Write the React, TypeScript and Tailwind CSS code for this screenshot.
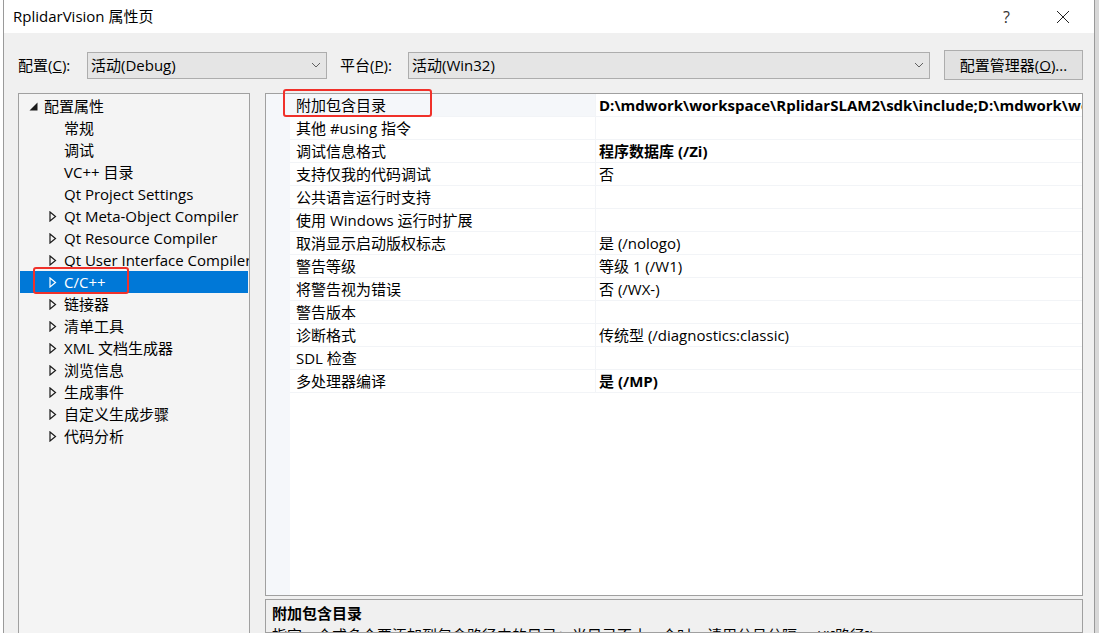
import React from 'react'

const font = { fontFamily: '"Open Sans", "Noto Sans CJK SC", sans-serif' }

const treeItems: { label: string; expander: boolean }[] = [
  { label: '常规', expander: false },
  { label: '调试', expander: false },
  { label: 'VC++ 目录', expander: false },
  { label: 'Qt Project Settings', expander: false },
  { label: 'Qt Meta-Object Compiler', expander: true },
  { label: 'Qt Resource Compiler', expander: true },
  { label: 'Qt User Interface Compiler', expander: true },
  { label: 'C/C++', expander: true },
  { label: '链接器', expander: true },
  { label: '清单工具', expander: true },
  { label: 'XML 文档生成器', expander: true },
  { label: '浏览信息', expander: true },
  { label: '生成事件', expander: true },
  { label: '自定义生成步骤', expander: true },
  { label: '代码分析', expander: true },
]

const props: { name: string; value: string; bold?: boolean }[] = [
  { name: '附加包含目录', value: 'D:\\mdwork\\workspace\\RplidarSLAM2\\sdk\\include;D:\\mdwork\\workspace\\RplidarSLAM2\\sdk\\src', bold: true },
  { name: '其他 #using 指令', value: '' },
  { name: '调试信息格式', value: '程序数据库 (/Zi)', bold: true },
  { name: '支持仅我的代码调试', value: '否' },
  { name: '公共语言运行时支持', value: '' },
  { name: '使用 Windows 运行时扩展', value: '' },
  { name: '取消显示启动版权标志', value: '是 (/nologo)' },
  { name: '警告等级', value: '等级 1 (/W1)' },
  { name: '将警告视为错误', value: '否 (/WX-)' },
  { name: '警告版本', value: '' },
  { name: '诊断格式', value: '传统型 (/diagnostics:classic)' },
  { name: 'SDL 检查', value: '' },
  { name: '多处理器编译', value: '是 (/MP)', bold: true },
]

function Chevron() {
  return (
    <svg width="10" height="6" viewBox="0 0 10 6" className="shrink-0">
      <path d="M1 1 L5 5 L9 1" fill="none" stroke="#606060" strokeWidth="1" />
    </svg>
  )
}

function Expander({ color }: { color: string }) {
  return (
    <svg width="8" height="11" viewBox="0 0 8 11" className="shrink-0">
      <path d="M1 1 L6.5 5.5 L1 10 Z" fill="none" stroke={color} strokeWidth="1.2" strokeLinejoin="miter" />
    </svg>
  )
}

function Dropdown({ text, width }: { text: string; width: string }) {
  return (
    <div className={`${width} shrink-0 h-[27px] bg-[#e5e5e5] border border-[#adadad] flex items-center justify-between pl-[3px] pr-[5px]`}>
      <span className="text-[15px] text-black">{text}</span>
      <Chevron />
    </div>
  )
}

export default function App() {
  return (
    <div className="w-[1099px] h-[633px] overflow-hidden flex bg-white" style={font}>
      <div className="w-[3px] shrink-0 bg-white" />
      <div className="relative flex-1 min-w-0 flex flex-col border-x border-[#9a9a9a] bg-[#f0f0f0]">
        {/* title bar */}
        <div className="h-[33px] shrink-0 bg-white flex items-center pl-[9px]">
          <span className="text-[15px] text-black">RplidarVision 属性页</span>
          <span className="ml-auto mr-[46px] text-[16px] text-[#333]">?</span>
          <svg width="14" height="14" viewBox="0 0 14 14" className="mr-[24px] shrink-0">
            <path d="M1 1 L13 13 M13 1 L1 13" stroke="#222" strokeWidth="1" />
          </svg>
        </div>

        {/* config row */}
        <div className="flex items-center h-[30px] mt-[17px] pl-[14px] pr-[11px]">
          <span className="text-[15px] text-black w-[69px] shrink-0">
            配置(<u>C</u>):
          </span>
          <Dropdown text="活动(Debug)" width="w-[240px]" />
          <span className="text-[15px] text-black ml-[13px] w-[68px] shrink-0">
            平台(<u>P</u>):
          </span>
          <Dropdown text="活动(Win32)" width="w-[522px]" />
          <div className="ml-auto w-[139px] shrink-0 h-[30px] bg-[#e1e1e1] border border-[#adadad] flex items-center justify-center">
            <span className="text-[15px] text-black whitespace-nowrap">
              配置管理器(<u>O</u>)...
            </span>
          </div>
        </div>

        {/* panels */}
        <div className="flex flex-1 min-h-0 mt-[13px] pl-[14px] pr-[11px] gap-[15px]">
          {/* tree */}
          <div className="w-[232px] shrink-0 h-[560px] bg-[#f4f4f4] border border-[#a0a0a0] pt-[1px] overflow-hidden">
            <div className="h-[22px] flex items-center pl-[10px]">
              <svg width="9" height="9" viewBox="0 0 9 9" className="shrink-0">
                <path d="M8.5 0.5 L8.5 8.5 L0.5 8.5 Z" fill="#1a1a1a" />
              </svg>
              <span className="ml-[6px] text-[15px] text-black whitespace-nowrap">配置属性</span>
            </div>
            {treeItems.map((item) => {
              const selected = item.label === 'C/C++'
              return (
                <div
                  key={item.label}
                  className={`h-[22px] flex items-center pl-[29px] mx-[1px] whitespace-nowrap ${selected ? 'bg-[#0078d7]' : ''}`}
                >
                  <span className="w-[15px] shrink-0 flex">{item.expander && <Expander color={selected ? '#ffffff' : '#1a1a1a'} />}</span>
                  <span className={`text-[15px] ${selected ? 'text-white' : 'text-black'}`}>{item.label}</span>
                </div>
              )
            })}
          </div>

          {/* right column */}
          <div className="flex-1 flex flex-col gap-[3px] min-w-0">
            <div className="h-[503px] shrink-0 bg-white border border-[#a0a0a0] flex overflow-hidden">
              <div className="w-[24px] shrink-0 bg-[#f5f7fa]" />
              <div className="flex-1 min-w-0">
                {props.map((p, i) => (
                  <div key={p.name} className="h-[23px] flex border-b border-[#f2f4f7]">
                    <div className={`w-[306px] shrink-0 flex items-center pl-[6px] border-r border-[#f2f4f7] ${i === 0 ? 'bg-[#f5f7fa]' : ''}`}>
                      <span className="text-[15px] text-black whitespace-nowrap">{p.name}</span>
                    </div>
                    <div className="flex-1 min-w-0 flex items-center pl-[3px] overflow-hidden">
                      <span className={`text-[15px] text-black whitespace-nowrap ${p.bold ? 'font-bold' : ''}`}>{p.value}</span>
                    </div>
                  </div>
                ))}
              </div>
            </div>
            <div className="flex-1 bg-[#f0f0f0] border border-[#a0a0a0] px-[6px] pt-[2px] overflow-hidden">
              <div className="text-[15px] font-bold text-black leading-[22px]">附加包含目录</div>
              <div className="text-[15px] text-black leading-[22px] whitespace-nowrap">
                指定一个或多个要添加到包含路径中的目录；当目录不止一个时，请用分号分隔。  (/I[路径])
              </div>
            </div>
          </div>
        </div>

        {/* red highlight boxes */}
        <div className="absolute left-[29px] top-[267px] w-[96px] h-[27px] border-[2.5px] border-[#f0312a] rounded-[3px]" />
        <div className="absolute left-[279px] top-[89px] w-[149px] h-[28px] border-[2.5px] border-[#f0312a] rounded-[3px]" />
      </div>
      <div className="w-[4px] shrink-0 bg-[#d8d8d8]" />
    </div>
  )
}
